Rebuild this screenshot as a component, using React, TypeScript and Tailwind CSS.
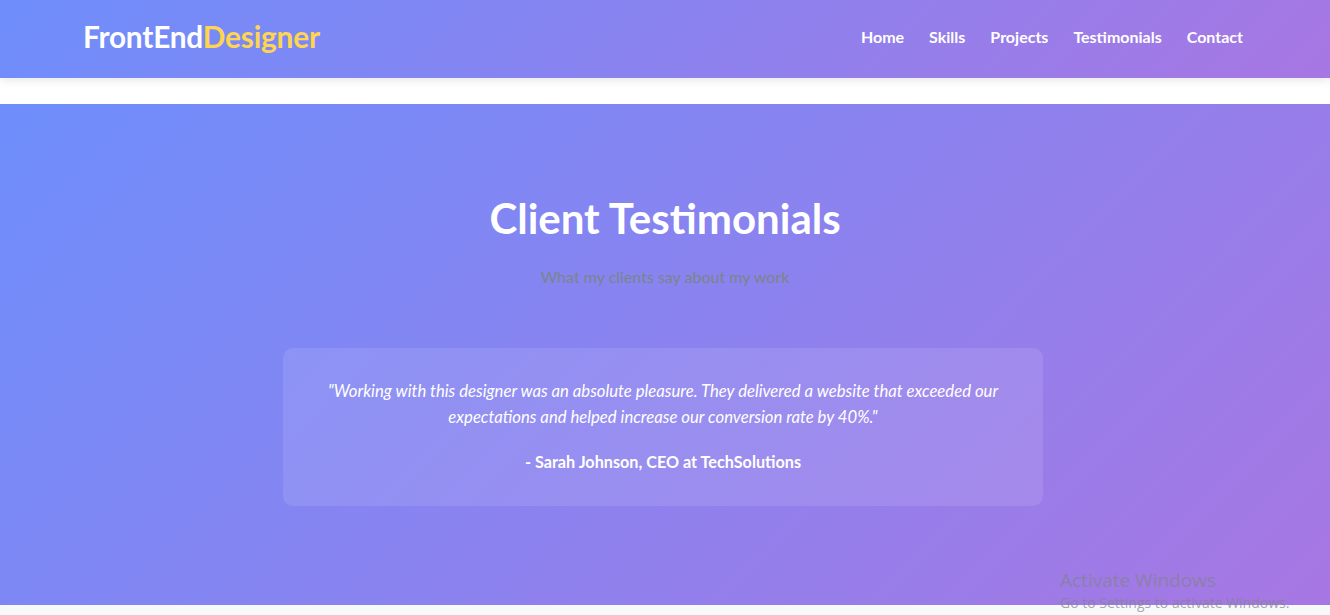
import React from "react";

const navLinks = ["Home", "Skills", "Projects", "Testimonials", "Contact"];

const Header = () => (
  <header className="relative z-10 h-[78px] bg-[linear-gradient(135deg,#6e8efb,#a777e3)] shadow-[0_2px_10px_rgba(0,0,0,0.1)]">
    <div className="flex h-full items-center justify-between pl-[83px] pr-[87px]">
      {/* Logo */}
      <div className="-mt-[3px] text-[29.8px] font-bold tracking-[-0.2px] text-white">
        FrontEnd<span className="text-[#ffd54f]">Designer</span>
      </div>

      <nav className="-mt-[4px] flex items-center gap-[25px]">
        {navLinks.map((link) => (
          <a key={link} href="#" className="text-[16px] font-bold text-white">
            {link}
          </a>
        ))}
      </nav>
    </div>
  </header>
);

const Testimonials = () => (
  <section className="bg-[linear-gradient(135deg,#6e8efb,#a777e3)] pt-[84px] pb-[99px]">
    <h2 className="text-center text-[42px] font-bold leading-[60px] text-white">
      Client Testimonials
    </h2>
    <p className="mt-[17px] text-center text-[16px] font-normal text-[#7b8588]">
      What my clients say about my work
    </p>

    <div className="ml-[283px] mt-[59px] w-[760px] rounded-[10px] bg-white/10 px-[40px] pt-[30px] pb-[31px] text-center">
      <p className="text-[16.7px] italic leading-[26px] text-white">
        "Working with this designer was an absolute pleasure. They delivered a website that exceeded our
        expectations and helped increase our conversion rate by 40%."
      </p>
      <p className="mt-[19px] text-[16.2px] font-bold leading-[26px] text-white">
        - Sarah Johnson, CEO at TechSolutions
      </p>
    </div>
  </section>
);

export default function App() {
  return (
    <div className="relative h-[615px] overflow-hidden bg-[#f8f9fa] font-['Lato','Open_Sans',sans-serif]">
      <Header />
      <div className="h-[26px] bg-white" />
      <Testimonials />

      {/* OS watermark */}
      <div className="pointer-events-none absolute left-[1060px] top-[568px] font-['Open_Sans',sans-serif] text-[rgba(130,130,140,0.7)]">
        <div className="text-[19px] leading-[25px]">Activate Windows</div>
        <div className="text-[14px] leading-[20px]">Go to Settings to activate Windows.</div>
      </div>
    </div>
  );
}
